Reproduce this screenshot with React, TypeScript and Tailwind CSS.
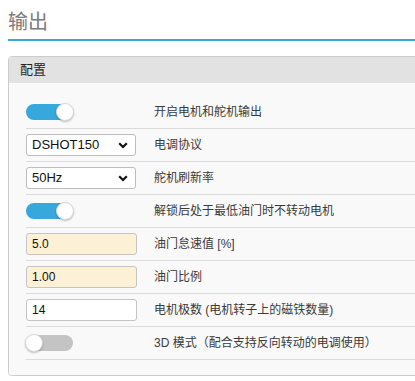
import { ReactNode } from 'react';

const font = { fontFamily: '"Liberation Sans", "Noto Sans CJK SC", sans-serif' };

function Toggle({ on }: { on: boolean }) {
  return (
    <div
      className={`relative w-[47px] h-[16px] rounded-full ${on ? 'bg-[#37a8db]' : 'bg-[#c4c4c4]'}`}
    >
      <div
        className={`absolute top-[-1px] w-[18px] h-[18px] rounded-full bg-white border border-[#d8d8d8] shadow-[0_1px_2px_rgba(0,0,0,0.25)] ${
          on ? 'right-[-1px]' : 'left-[-1px]'
        }`}
      />
    </div>
  );
}

function Select({ value }: { value: string }) {
  return (
    <div className="flex items-center justify-between w-[110px] h-[22px] pl-[5px] pr-[5px] bg-white border border-[#bdbdbd] rounded-[3px] text-[13px] text-[#111]">
      <span>{value}</span>
      <svg width="10" height="7" viewBox="0 0 10 7" className="mr-[2px]">
        <path d="M1.2 1.2 L5 5 L8.8 1.2" fill="none" stroke="#111" strokeWidth="2.2" />
      </svg>
    </div>
  );
}

function Field({ value, cream = true }: { value: string; cream?: boolean }) {
  return (
    <div
      className={`flex items-center w-[111px] h-[22px] pl-[5px] border border-[#c4c4c4] rounded-[3px] text-[12px] text-[#111] ${
        cream ? 'bg-[#fdf1d5]' : 'bg-white'
      }`}
    >
      {value}
    </div>
  );
}

function Row({ control, children }: { control: ReactNode; children: ReactNode }) {
  return (
    <div className="flex items-center h-[33px] border-b border-[#dcdcdc]">
      <div className="w-[128px] shrink-0 flex items-center">{control}</div>
      <div className="text-[12px] text-[#3a3a3a] whitespace-nowrap">{children}</div>
    </div>
  );
}

export default function App() {
  return (
    <div className="w-[415px] h-[381px] overflow-hidden bg-white" style={font}>
      <div className="ml-2 w-[430px]">
        {/* Title */}
        <div className="h-[41px] pt-[4px] border-b-2 border-[#37a8db] text-[20px] leading-[36px] text-[#7b7b7b]">
          输出
        </div>

        {/* Config panel */}
        <div className="mt-[15px] border border-[#cccccc] rounded-[4px] overflow-hidden">
          <div className="h-[26px] pl-[11px] flex items-center bg-[#e2e2e2] text-[13px] text-[#222]">
            配置
          </div>
          <div className="bg-[#f9f9f9] pt-[13px] pb-[15px] pl-[17px]">
            <Row control={<Toggle on />}>开启电机和舵机输出</Row>
            <Row control={<Select value="DSHOT150" />}>电调协议</Row>
            <Row control={<Select value="50Hz" />}>舵机刷新率</Row>
            <Row control={<Toggle on />}>解锁后处于最低油门时不转动电机</Row>
            <Row control={<Field value="5.0" />}>油门怠速值 [%]</Row>
            <Row control={<Field value="1.00" />}>油门比例</Row>
            <Row control={<Field value="14" cream={false} />}>电机极数 (电机转子上的磁铁数量)</Row>
            <Row control={<Toggle on={false} />}>3D 模式（配合支持反向转动的电调使用）</Row>
          </div>
        </div>
      </div>
    </div>
  );
}
